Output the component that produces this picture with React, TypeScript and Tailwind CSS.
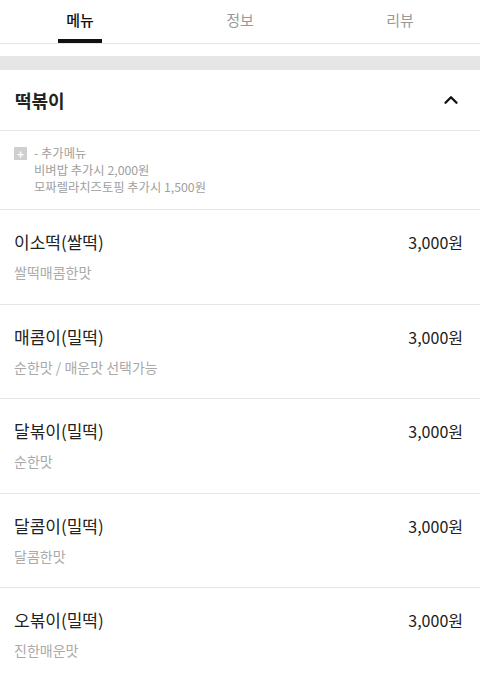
import { ChevronUp } from "lucide-react";

const items = [
  { name: "이소떡(쌀떡)", price: "3,000원", desc: "쌀떡매콤한맛" },
  { name: "매콤이(밀떡)", price: "3,000원", desc: "순한맛 / 매운맛 선택가능" },
  { name: "달볶이(밀떡)", price: "3,000원", desc: "순한맛" },
  { name: "달콤이(밀떡)", price: "3,000원", desc: "달콤한맛" },
  { name: "오볶이(밀떡)", price: "3,000원", desc: "진한매운맛" },
];

const tabs = ["메뉴", "정보", "리뷰"];

export default function App() {
  return (
    <div
      className="w-[480px] h-[679px] overflow-hidden bg-white text-[#222]"
      style={{ fontFamily: '"Noto Sans CJK KR", "Noto Sans", sans-serif' }}
    >
      {/* Tabs */}
      <div className="flex h-[44px] border-b border-[#e6e6e6]">
        {tabs.map((t, i) => (
          <div key={t} className="flex-1 flex flex-col items-center">
            <div
              className={`h-[40px] flex items-center text-[15px] leading-none ${
                i === 0 ? "text-[#111] font-medium" : "text-[#999]"
              }`}
            >
              <span className="-mt-[1px]">{t}</span>
            </div>
            {i === 0 && <div className="w-[44px] h-[4px] bg-[#111]" />}
          </div>
        ))}
      </div>

      <div className="h-[12px]" />
      <div className="h-[14px] bg-[#e6e6e6]" />

      {/* Category header */}
      <div className="h-[61px] flex items-center justify-between pl-[15px] pr-[18px] border-b border-[#e6e6e6]">
        <span className="text-[18px] font-bold">떡볶이</span>
        <ChevronUp size={22} strokeWidth={2.6} className="text-[#111]" />
      </div>

      {/* Extra menu info */}
      <div className="h-[79px] pl-[14px] pt-[14px] border-b border-[#e6e6e6] text-[12.3px] leading-[17px] text-[#a0a0a0]">
        <div className="flex items-center gap-[7px]">
          <span className="w-[13px] h-[13px] bg-[#cfcfcf] flex items-center justify-center text-white text-[12px] font-bold leading-none">
            +
          </span>
          <span>- 추가메뉴</span>
        </div>
        <div className="pl-[20px]">비벼밥 추가시 2,000원</div>
        <div className="pl-[20px]">모짜렐라치즈토핑 추가시 1,500원</div>
      </div>

      {/* Items */}
      {items.map((it) => (
        <div key={it.name} className="h-[94.5px] px-[14px] pr-[17px] pt-[20px] border-b border-[#e6e6e6]">
          <div className="flex justify-between items-center leading-[24px] text-[#222]">
            <span className="text-[17px]">{it.name}</span>
            <span className="text-[16px]">{it.price}</span>
          </div>
          <div className="mt-[8px] text-[14px] leading-[20px] text-[#aaa]">{it.desc}</div>
        </div>
      ))}
    </div>
  );
}
